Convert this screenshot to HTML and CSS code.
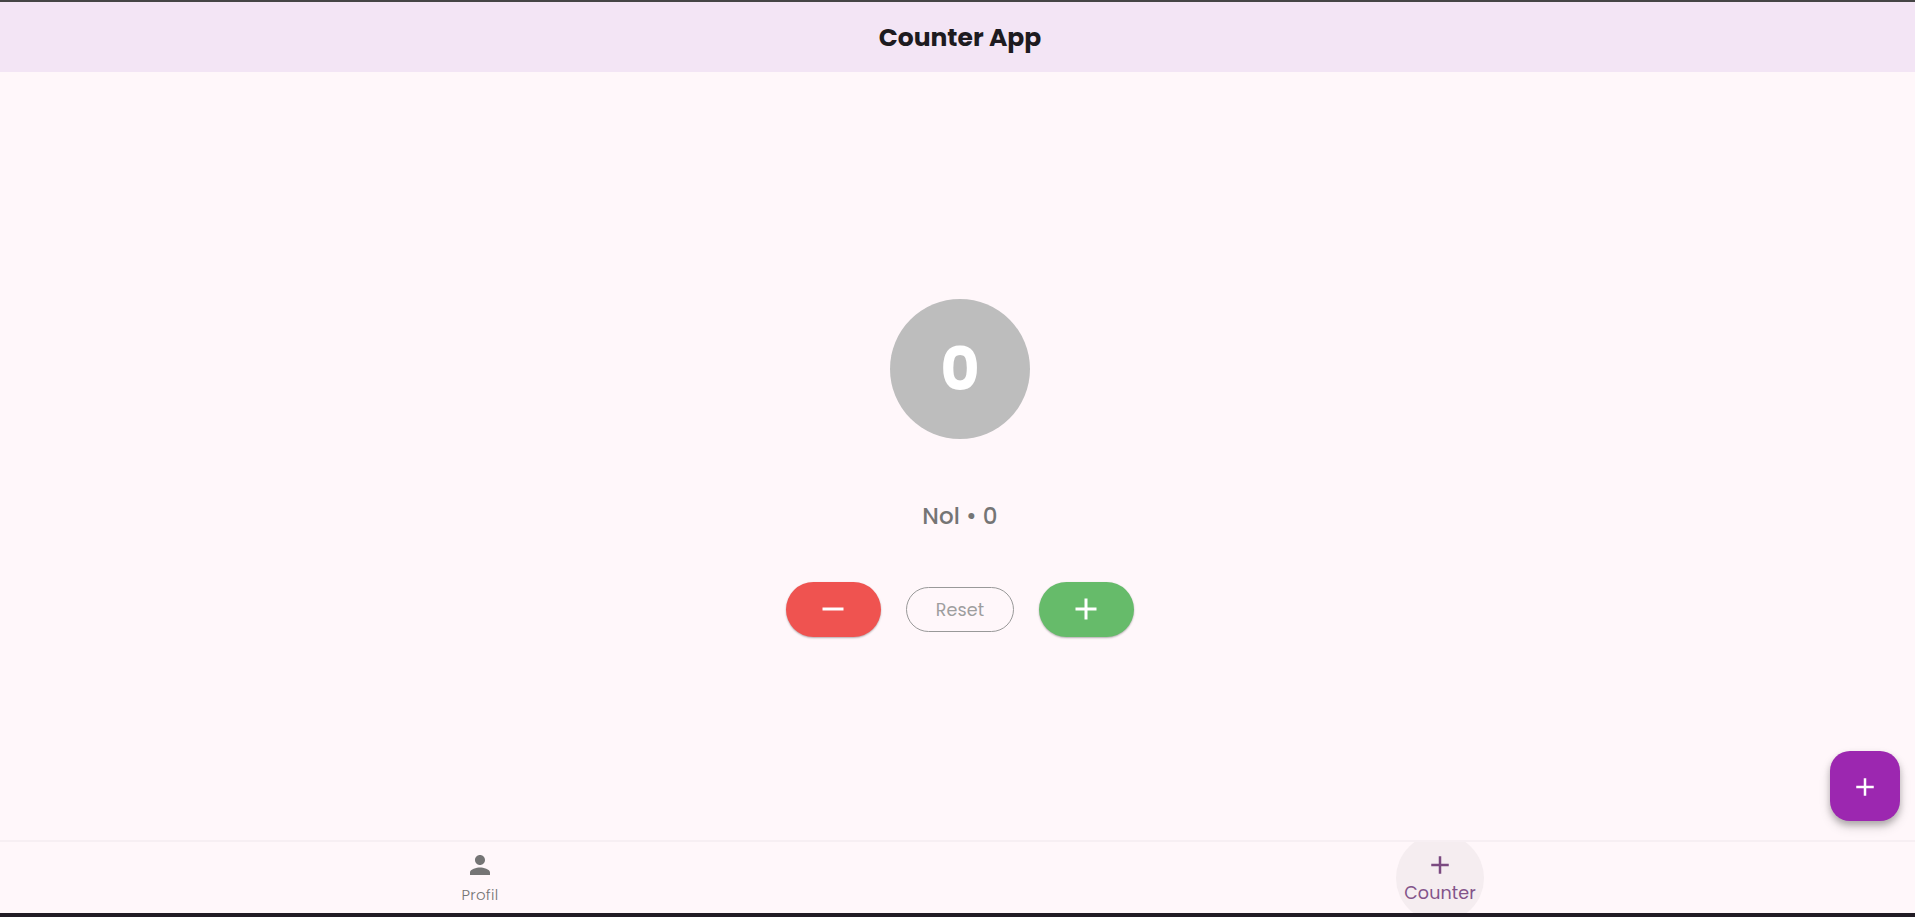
FILE: index.html
```html
<!DOCTYPE html>
<html lang="id">
<head>
<meta charset="utf-8">
<title>Counter App</title>
<link rel="stylesheet" href="styles.css">
</head>
<body>
<div class="app">
  <header class="app-bar"><h1 class="title">Counter App</h1></header>
  <main class="content">
    <div class="count"><span class="count-value">0</span></div>
    <p class="status">Nol • 0</p>
    <div class="actions">
      <button class="pill pill-minus" aria-label="Kurang"><svg width="36" height="36" viewBox="0 0 24 24"><path d="M19 13H5v-2h14z"/></svg></button>
      <button class="reset"><span class="reset-label">Reset</span></button>
      <button class="pill pill-plus" aria-label="Tambah"><svg width="36" height="36" viewBox="0 0 24 24"><path d="M19 13h-6v6h-2v-6H5v-2h6V5h2v6h6z"/></svg></button>
    </div>
  </main>
  <nav class="nav">
    <a class="nav-item"><svg width="30" height="30" viewBox="0 0 24 24"><path d="M12 12c2.21 0 4-1.79 4-4s-1.79-4-4-4-4 1.79-4 4 1.79 4 4 4zm0 2c-2.67 0-8 1.34-8 4v2h16v-2c0-2.66-5.33-4-8-4z"/></svg><span class="nav-label">Profil</span></a>
    <a class="nav-item nav-active"><svg width="30" height="30" viewBox="0 0 24 24"><path d="M19 13h-6v6h-2v-6H5v-2h6V5h2v6h6z"/></svg><span class="nav-label">Counter</span></a>
  </nav>
  <button class="fab" aria-label="Tambah"><svg width="30" height="30" viewBox="0 0 24 24"><path d="M19 13h-6v6h-2v-6H5v-2h6V5h2v6h6z"/></svg></button>
</div>
</body>
</html>
```
FILE: styles.css
```css
* { box-sizing: border-box; }
html { overflow: hidden; }
body { margin: 0; overflow: hidden; font-family: Poppins, Inter, sans-serif; background: #fff7fa; }
button { border: 0; padding: 0; font: inherit; display: flex; align-items: center; justify-content: center; }
svg { display: block; fill: currentColor; }
.app { position: relative; width: 1920px; height: 917px; border-top: 2px solid #454545; border-bottom: 4px solid #211b24; display: flex; flex-direction: column; }
.app-bar { height: 70px; padding-top: 2px; background: #f3e5f5; display: flex; align-items: center; justify-content: center; }
.title { margin: 0; font-size: 25px; line-height: 38px; font-weight: 700; color: #1d1b20; }
.content { flex: 1; display: flex; flex-direction: column; align-items: center; padding-top: 227.4px; }
.count { width: 140px; height: 140px; border-radius: 50%; background: #bdbdbd; color: #fff; display: flex; align-items: center; justify-content: center; }
.count-value { font-size: 60px; line-height: 90px; font-weight: 700; }
.status { margin: 59px 0 48px; font-size: 23px; line-height: 36px; font-weight: 500; letter-spacing: 0.1px; color: #757575; }
.actions { display: flex; align-items: center; gap: 25px; }
.pill { width: 95px; height: 55px; border-radius: 28px; color: #fff; box-shadow: 0 1px 2px rgba(0, 0, 0, 0.3); }
.pill svg { margin: 0 1px 1px 0; }
.pill-minus { background: #ef5350; }
.pill-plus { background: #66bb6a; }
.reset { width: 108px; height: 45px; border: 1px solid #999; border-radius: 23px; background: transparent; color: #9e9e9e; font-size: 17.5px; letter-spacing: 0.1px; }
.nav { height: 73px; border-top: 2px solid #f7eff3; display: flex; overflow: hidden; }
.nav-item { position: relative; flex: 1; display: flex; flex-direction: column; align-items: center; padding-top: 8px; color: #757575; }
.nav-label { font-size: 15px; line-height: 22px; margin-top: 4px; font-weight: 300; color: #757575; letter-spacing: 0.3px; }
.nav-active { color: #7b4a80; }
.nav-active .nav-label { font-size: 17.5px; line-height: 26px; margin-top: 0; font-weight: 400; letter-spacing: 0.1px; color: #83548a; }
.nav-active::before { content: ""; position: absolute; z-index: -1; left: 50%; top: -8px; width: 88px; height: 88px; margin-left: -44px; border-radius: 50%; background: #f5edf0; }
.fab { position: absolute; left: 1830px; top: 749.4px; width: 70px; height: 70px; border-radius: 20px; background: #9c27b0; color: #fff; box-shadow: 0 4px 6px rgba(0, 0, 0, 0.22), 0 6px 12px rgba(0, 0, 0, 0.14); }
.fab svg { margin-top: 2px; }
```
